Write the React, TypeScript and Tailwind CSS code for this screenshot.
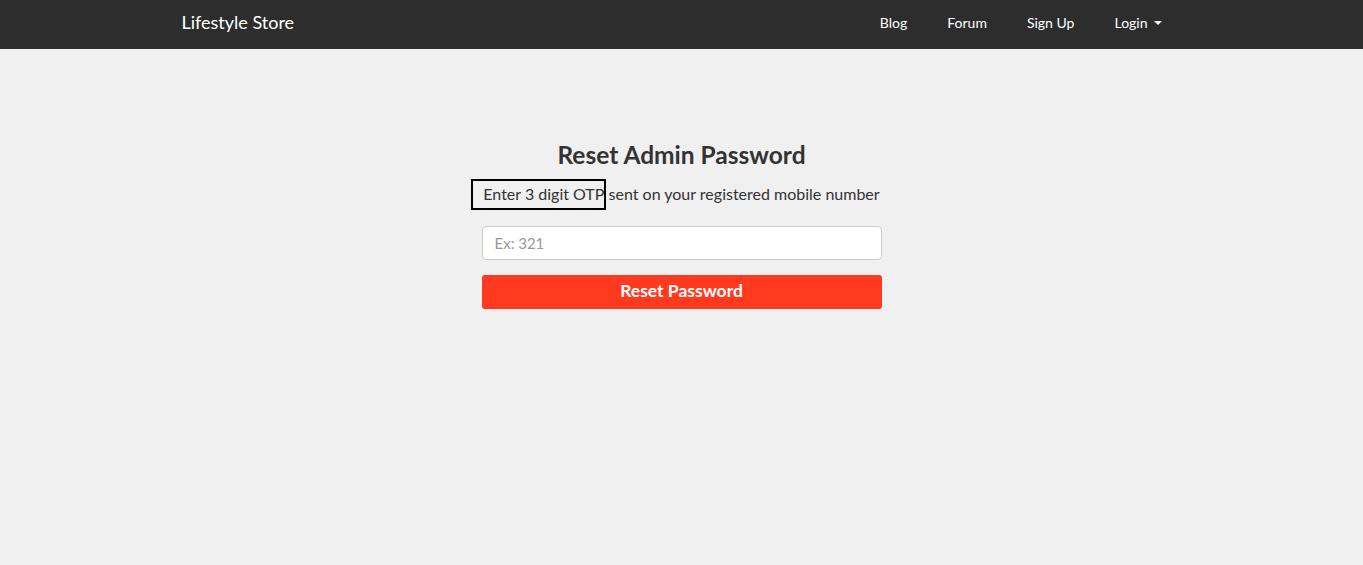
export default function App() {
  return (
    <div className="min-h-[565px] bg-[#f0f0f0] font-['Lato',sans-serif] text-[#333]">
      <nav className="h-[49px] bg-[#2d2d2d]">
        <div className="mx-auto flex h-full w-[1000px] items-center justify-between pb-[4px]">
          <a className="text-[18px] text-white">Lifestyle Store</a>
          <ul className="flex items-center text-[14px] text-white">
            <li className="px-5">Blog</li>
            <li className="px-5">Forum</li>
            <li className="px-5">Sign Up</li>
            <li className="flex items-center px-5">
              Login
              <span className="ml-[6px] h-0 w-0 border-x-4 border-t-4 border-x-transparent border-t-white" />
            </li>
          </ul>
        </div>
      </nav>

      <div className="mx-auto mt-[94px] flex w-[400px] flex-col items-center">
        <h2 className="text-[24.5px] font-bold leading-none text-[#333]">Reset Admin Password</h2>
        <p className="mt-[11px] whitespace-nowrap text-[16px] leading-[30px]">
          <span className="relative">
            Enter 3 digit OTP
            <span className="absolute -left-3 -right-[2px] -top-[5px] -bottom-[7px] border-2 border-black" />
          </span>{" "}
          sent on your registered mobile number
        </p>
        <input
          className="mt-[17px] h-[34px] w-full rounded-[4px] border border-[#ccc] bg-white px-3 text-[15px] outline-none placeholder:text-[#999]"
          placeholder="Ex: 321"
        />
        <button className="mt-[15px] h-[34px] w-full rounded-[3px] bg-[#ff3a1f] text-[17.5px] font-bold text-white">
          Reset Password
        </button>
      </div>
    </div>
  );
}
